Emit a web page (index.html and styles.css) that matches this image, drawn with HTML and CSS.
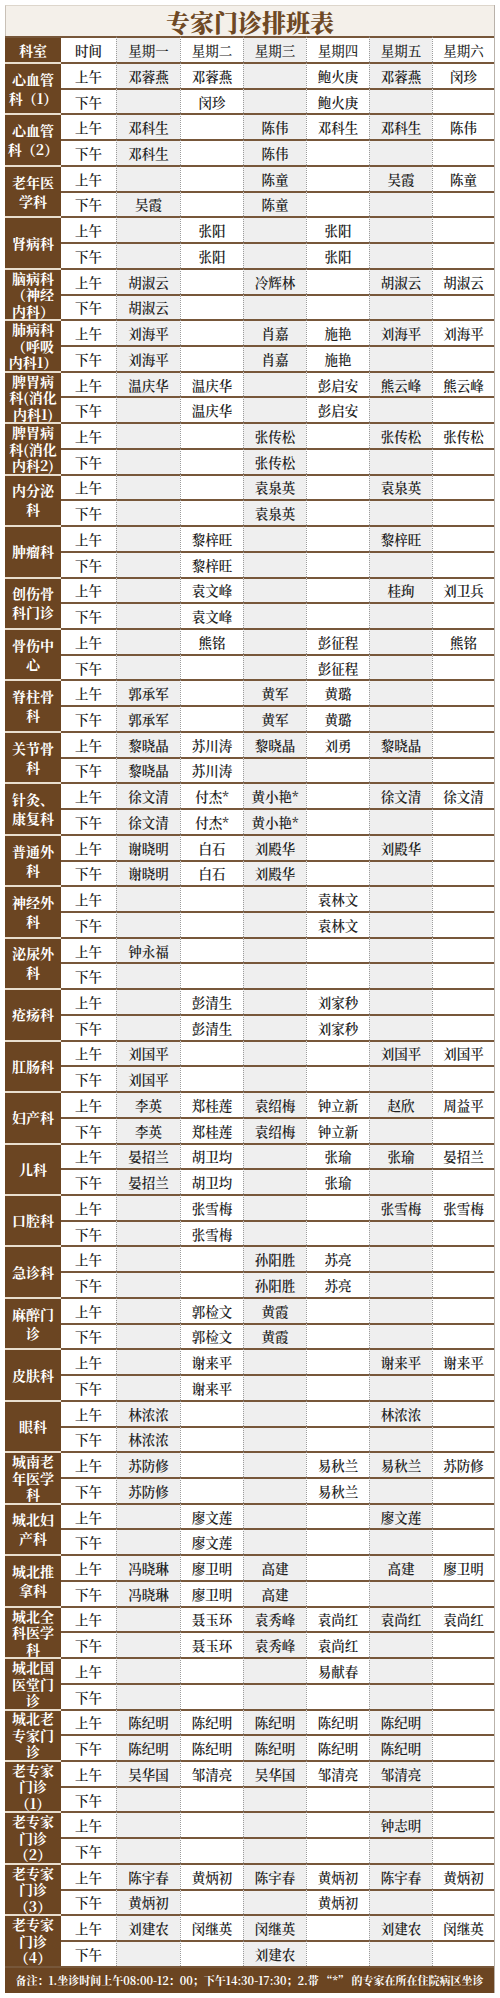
FILE: index.html
```html
<!DOCTYPE html>
<html lang="zh-CN">
<head>
<meta charset="utf-8">
<title>专家门诊排班表</title>
<link rel="stylesheet" href="styles.css">
</head>
<body>
<div class="sheet">
  <div class="title">专家门诊排班表</div>
  <div class="head">
    <div class="name">科室</div><div class="t">时间</div><div class="d">星期一</div><div class="d">星期二</div><div class="d">星期三</div><div class="d">星期四</div><div class="d">星期五</div><div class="d">星期六</div>
  </div>

  <div class="dept"><div class="name">心血管<br>科（1）</div>
    <div class="t">上午</div><div class="d">邓蓉燕</div><div class="d">邓蓉燕</div><div class="d"></div><div class="d">鲍火庚</div><div class="d">邓蓉燕</div><div class="d">闵珍</div>
    <div class="t">下午</div><div class="d"></div><div class="d">闵珍</div><div class="d"></div><div class="d">鲍火庚</div><div class="d"></div><div class="d"></div>
  </div>
  <div class="dept"><div class="name">心血管<br>科（2）</div>
    <div class="t">上午</div><div class="d">邓科生</div><div class="d"></div><div class="d">陈伟</div><div class="d">邓科生</div><div class="d">邓科生</div><div class="d">陈伟</div>
    <div class="t">下午</div><div class="d">邓科生</div><div class="d"></div><div class="d">陈伟</div><div class="d"></div><div class="d"></div><div class="d"></div>
  </div>
  <div class="dept"><div class="name">老年医<br>学科</div>
    <div class="t">上午</div><div class="d"></div><div class="d"></div><div class="d">陈童</div><div class="d"></div><div class="d">吴霞</div><div class="d">陈童</div>
    <div class="t">下午</div><div class="d">吴霞</div><div class="d"></div><div class="d">陈童</div><div class="d"></div><div class="d"></div><div class="d"></div>
  </div>
  <div class="dept"><div class="name">肾病科</div>
    <div class="t">上午</div><div class="d"></div><div class="d">张阳</div><div class="d"></div><div class="d">张阳</div><div class="d"></div><div class="d"></div>
    <div class="t">下午</div><div class="d"></div><div class="d">张阳</div><div class="d"></div><div class="d">张阳</div><div class="d"></div><div class="d"></div>
  </div>
  <div class="dept"><div class="name l3">脑病科<br>（神经<br>内科）</div>
    <div class="t">上午</div><div class="d">胡淑云</div><div class="d"></div><div class="d">冷辉林</div><div class="d"></div><div class="d">胡淑云</div><div class="d">胡淑云</div>
    <div class="t">下午</div><div class="d">胡淑云</div><div class="d"></div><div class="d"></div><div class="d"></div><div class="d"></div><div class="d"></div>
  </div>
  <div class="dept"><div class="name l3">肺病科<br>（呼吸<br>内科1）</div>
    <div class="t">上午</div><div class="d">刘海平</div><div class="d"></div><div class="d">肖嘉</div><div class="d">施艳</div><div class="d">刘海平</div><div class="d">刘海平</div>
    <div class="t">下午</div><div class="d">刘海平</div><div class="d"></div><div class="d">肖嘉</div><div class="d">施艳</div><div class="d"></div><div class="d"></div>
  </div>
  <div class="dept"><div class="name l3">脾胃病<br>科(消化<br>内科1)</div>
    <div class="t">上午</div><div class="d">温庆华</div><div class="d">温庆华</div><div class="d"></div><div class="d">彭启安</div><div class="d">熊云峰</div><div class="d">熊云峰</div>
    <div class="t">下午</div><div class="d"></div><div class="d">温庆华</div><div class="d"></div><div class="d">彭启安</div><div class="d"></div><div class="d"></div>
  </div>
  <div class="dept"><div class="name l3">脾胃病<br>科(消化<br>内科2)</div>
    <div class="t">上午</div><div class="d"></div><div class="d"></div><div class="d">张传松</div><div class="d"></div><div class="d">张传松</div><div class="d">张传松</div>
    <div class="t">下午</div><div class="d"></div><div class="d"></div><div class="d">张传松</div><div class="d"></div><div class="d"></div><div class="d"></div>
  </div>
  <div class="dept"><div class="name">内分泌<br>科</div>
    <div class="t">上午</div><div class="d"></div><div class="d"></div><div class="d">袁泉英</div><div class="d"></div><div class="d">袁泉英</div><div class="d"></div>
    <div class="t">下午</div><div class="d"></div><div class="d"></div><div class="d">袁泉英</div><div class="d"></div><div class="d"></div><div class="d"></div>
  </div>
  <div class="dept"><div class="name">肿瘤科</div>
    <div class="t">上午</div><div class="d"></div><div class="d">黎梓旺</div><div class="d"></div><div class="d"></div><div class="d">黎梓旺</div><div class="d"></div>
    <div class="t">下午</div><div class="d"></div><div class="d">黎梓旺</div><div class="d"></div><div class="d"></div><div class="d"></div><div class="d"></div>
  </div>
  <div class="dept"><div class="name">创伤骨<br>科门诊</div>
    <div class="t">上午</div><div class="d"></div><div class="d">袁文峰</div><div class="d"></div><div class="d"></div><div class="d">桂珣</div><div class="d">刘卫兵</div>
    <div class="t">下午</div><div class="d"></div><div class="d">袁文峰</div><div class="d"></div><div class="d"></div><div class="d"></div><div class="d"></div>
  </div>
  <div class="dept"><div class="name">骨伤中<br>心</div>
    <div class="t">上午</div><div class="d"></div><div class="d">熊铭</div><div class="d"></div><div class="d">彭征程</div><div class="d"></div><div class="d">熊铭</div>
    <div class="t">下午</div><div class="d"></div><div class="d"></div><div class="d"></div><div class="d">彭征程</div><div class="d"></div><div class="d"></div>
  </div>
  <div class="dept"><div class="name">脊柱骨<br>科</div>
    <div class="t">上午</div><div class="d">郭承军</div><div class="d"></div><div class="d">黄军</div><div class="d">黄璐</div><div class="d"></div><div class="d"></div>
    <div class="t">下午</div><div class="d">郭承军</div><div class="d"></div><div class="d">黄军</div><div class="d">黄璐</div><div class="d"></div><div class="d"></div>
  </div>
  <div class="dept"><div class="name">关节骨<br>科</div>
    <div class="t">上午</div><div class="d">黎晓晶</div><div class="d">苏川涛</div><div class="d">黎晓晶</div><div class="d">刘勇</div><div class="d">黎晓晶</div><div class="d"></div>
    <div class="t">下午</div><div class="d">黎晓晶</div><div class="d">苏川涛</div><div class="d"></div><div class="d"></div><div class="d"></div><div class="d"></div>
  </div>
  <div class="dept"><div class="name">针灸、<br>康复科</div>
    <div class="t">上午</div><div class="d">徐文清</div><div class="d">付杰*</div><div class="d">黄小艳*</div><div class="d"></div><div class="d">徐文清</div><div class="d">徐文清</div>
    <div class="t">下午</div><div class="d">徐文清</div><div class="d">付杰*</div><div class="d">黄小艳*</div><div class="d"></div><div class="d"></div><div class="d"></div>
  </div>
  <div class="dept"><div class="name">普通外<br>科</div>
    <div class="t">上午</div><div class="d">谢晓明</div><div class="d">白石</div><div class="d">刘殿华</div><div class="d"></div><div class="d">刘殿华</div><div class="d"></div>
    <div class="t">下午</div><div class="d">谢晓明</div><div class="d">白石</div><div class="d">刘殿华</div><div class="d"></div><div class="d"></div><div class="d"></div>
  </div>
  <div class="dept"><div class="name">神经外<br>科</div>
    <div class="t">上午</div><div class="d"></div><div class="d"></div><div class="d"></div><div class="d">袁林文</div><div class="d"></div><div class="d"></div>
    <div class="t">下午</div><div class="d"></div><div class="d"></div><div class="d"></div><div class="d">袁林文</div><div class="d"></div><div class="d"></div>
  </div>
  <div class="dept"><div class="name">泌尿外<br>科</div>
    <div class="t">上午</div><div class="d">钟永福</div><div class="d"></div><div class="d"></div><div class="d"></div><div class="d"></div><div class="d"></div>
    <div class="t">下午</div><div class="d"></div><div class="d"></div><div class="d"></div><div class="d"></div><div class="d"></div><div class="d"></div>
  </div>
  <div class="dept"><div class="name">疮疡科</div>
    <div class="t">上午</div><div class="d"></div><div class="d">彭清生</div><div class="d"></div><div class="d">刘家秒</div><div class="d"></div><div class="d"></div>
    <div class="t">下午</div><div class="d"></div><div class="d">彭清生</div><div class="d"></div><div class="d">刘家秒</div><div class="d"></div><div class="d"></div>
  </div>
  <div class="dept"><div class="name">肛肠科</div>
    <div class="t">上午</div><div class="d">刘国平</div><div class="d"></div><div class="d"></div><div class="d"></div><div class="d">刘国平</div><div class="d">刘国平</div>
    <div class="t">下午</div><div class="d">刘国平</div><div class="d"></div><div class="d"></div><div class="d"></div><div class="d"></div><div class="d"></div>
  </div>
  <div class="dept"><div class="name">妇产科</div>
    <div class="t">上午</div><div class="d">李英</div><div class="d">郑桂莲</div><div class="d">袁绍梅</div><div class="d">钟立新</div><div class="d">赵欣</div><div class="d">周益平</div>
    <div class="t">下午</div><div class="d">李英</div><div class="d">郑桂莲</div><div class="d">袁绍梅</div><div class="d">钟立新</div><div class="d"></div><div class="d"></div>
  </div>
  <div class="dept"><div class="name">儿科</div>
    <div class="t">上午</div><div class="d">晏招兰</div><div class="d">胡卫均</div><div class="d"></div><div class="d">张瑜</div><div class="d">张瑜</div><div class="d">晏招兰</div>
    <div class="t">下午</div><div class="d">晏招兰</div><div class="d">胡卫均</div><div class="d"></div><div class="d">张瑜</div><div class="d"></div><div class="d"></div>
  </div>
  <div class="dept"><div class="name">口腔科</div>
    <div class="t">上午</div><div class="d"></div><div class="d">张雪梅</div><div class="d"></div><div class="d"></div><div class="d">张雪梅</div><div class="d">张雪梅</div>
    <div class="t">下午</div><div class="d"></div><div class="d">张雪梅</div><div class="d"></div><div class="d"></div><div class="d"></div><div class="d"></div>
  </div>
  <div class="dept"><div class="name">急诊科</div>
    <div class="t">上午</div><div class="d"></div><div class="d"></div><div class="d">孙阳胜</div><div class="d">苏亮</div><div class="d"></div><div class="d"></div>
    <div class="t">下午</div><div class="d"></div><div class="d"></div><div class="d">孙阳胜</div><div class="d">苏亮</div><div class="d"></div><div class="d"></div>
  </div>
  <div class="dept"><div class="name">麻醉门<br>诊</div>
    <div class="t">上午</div><div class="d"></div><div class="d">郭检文</div><div class="d">黄霞</div><div class="d"></div><div class="d"></div><div class="d"></div>
    <div class="t">下午</div><div class="d"></div><div class="d">郭检文</div><div class="d">黄霞</div><div class="d"></div><div class="d"></div><div class="d"></div>
  </div>
  <div class="dept"><div class="name">皮肤科</div>
    <div class="t">上午</div><div class="d"></div><div class="d">谢来平</div><div class="d"></div><div class="d"></div><div class="d">谢来平</div><div class="d">谢来平</div>
    <div class="t">下午</div><div class="d"></div><div class="d">谢来平</div><div class="d"></div><div class="d"></div><div class="d"></div><div class="d"></div>
  </div>
  <div class="dept"><div class="name">眼科</div>
    <div class="t">上午</div><div class="d">林浓浓</div><div class="d"></div><div class="d"></div><div class="d"></div><div class="d">林浓浓</div><div class="d"></div>
    <div class="t">下午</div><div class="d">林浓浓</div><div class="d"></div><div class="d"></div><div class="d"></div><div class="d"></div><div class="d"></div>
  </div>
  <div class="dept"><div class="name l3">城南老<br>年医学<br>科</div>
    <div class="t">上午</div><div class="d">苏防修</div><div class="d"></div><div class="d"></div><div class="d">易秋兰</div><div class="d">易秋兰</div><div class="d">苏防修</div>
    <div class="t">下午</div><div class="d">苏防修</div><div class="d"></div><div class="d"></div><div class="d">易秋兰</div><div class="d"></div><div class="d"></div>
  </div>
  <div class="dept"><div class="name">城北妇<br>产科</div>
    <div class="t">上午</div><div class="d"></div><div class="d">廖文莲</div><div class="d"></div><div class="d"></div><div class="d">廖文莲</div><div class="d"></div>
    <div class="t">下午</div><div class="d"></div><div class="d">廖文莲</div><div class="d"></div><div class="d"></div><div class="d"></div><div class="d"></div>
  </div>
  <div class="dept"><div class="name">城北推<br>拿科</div>
    <div class="t">上午</div><div class="d">冯晓琳</div><div class="d">廖卫明</div><div class="d">高建</div><div class="d"></div><div class="d">高建</div><div class="d">廖卫明</div>
    <div class="t">下午</div><div class="d">冯晓琳</div><div class="d">廖卫明</div><div class="d">高建</div><div class="d"></div><div class="d"></div><div class="d"></div>
  </div>
  <div class="dept"><div class="name l3">城北全<br>科医学<br>科</div>
    <div class="t">上午</div><div class="d"></div><div class="d">聂玉环</div><div class="d">袁秀峰</div><div class="d">袁尚红</div><div class="d">袁尚红</div><div class="d">袁尚红</div>
    <div class="t">下午</div><div class="d"></div><div class="d">聂玉环</div><div class="d">袁秀峰</div><div class="d">袁尚红</div><div class="d"></div><div class="d"></div>
  </div>
  <div class="dept"><div class="name l3">城北国<br>医堂门<br>诊</div>
    <div class="t">上午</div><div class="d"></div><div class="d"></div><div class="d"></div><div class="d">易献春</div><div class="d"></div><div class="d"></div>
    <div class="t">下午</div><div class="d"></div><div class="d"></div><div class="d"></div><div class="d"></div><div class="d"></div><div class="d"></div>
  </div>
  <div class="dept"><div class="name l3">城北老<br>专家门<br>诊</div>
    <div class="t">上午</div><div class="d">陈纪明</div><div class="d">陈纪明</div><div class="d">陈纪明</div><div class="d">陈纪明</div><div class="d">陈纪明</div><div class="d"></div>
    <div class="t">下午</div><div class="d">陈纪明</div><div class="d">陈纪明</div><div class="d">陈纪明</div><div class="d">陈纪明</div><div class="d">陈纪明</div><div class="d"></div>
  </div>
  <div class="dept"><div class="name l3">老专家<br>门诊<br>（1）</div>
    <div class="t">上午</div><div class="d">吴华国</div><div class="d">邹清亮</div><div class="d">吴华国</div><div class="d">邹清亮</div><div class="d">邹清亮</div><div class="d"></div>
    <div class="t">下午</div><div class="d"></div><div class="d"></div><div class="d"></div><div class="d"></div><div class="d"></div><div class="d"></div>
  </div>
  <div class="dept"><div class="name l3">老专家<br>门诊<br>（2）</div>
    <div class="t">上午</div><div class="d"></div><div class="d"></div><div class="d"></div><div class="d"></div><div class="d">钟志明</div><div class="d"></div>
    <div class="t">下午</div><div class="d"></div><div class="d"></div><div class="d"></div><div class="d"></div><div class="d"></div><div class="d"></div>
  </div>
  <div class="dept"><div class="name l3">老专家<br>门诊<br>（3）</div>
    <div class="t">上午</div><div class="d">陈宇春</div><div class="d">黄炳初</div><div class="d">陈宇春</div><div class="d">黄炳初</div><div class="d">陈宇春</div><div class="d">黄炳初</div>
    <div class="t">下午</div><div class="d">黄炳初</div><div class="d"></div><div class="d"></div><div class="d">黄炳初</div><div class="d"></div><div class="d"></div>
  </div>
  <div class="dept"><div class="name l3">老专家<br>门诊<br>（4）</div>
    <div class="t">上午</div><div class="d">刘建农</div><div class="d">闵继英</div><div class="d">闵继英</div><div class="d"></div><div class="d">刘建农</div><div class="d">闵继英</div>
    <div class="t">下午</div><div class="d"></div><div class="d"></div><div class="d">刘建农</div><div class="d"></div><div class="d"></div><div class="d"></div>
  </div>

  <div class="foot">备注：1.坐诊时间上午08:00-12：00；下午14:30-17:30；2.带 “*” 的专家在所在住院病区坐诊</div>
</div>
</body>
</html>
```

FILE: styles.css
```css
* { box-sizing: border-box; }

body {
  margin: 0;
  background: #ffffff;
  font-family: "Noto Serif CJK SC", "Noto Sans CJK SC", serif;
  color: #1f1f1f;
}

.sheet {
  margin: 5px 0 0 5px;
  width: 490px;
  border-right: 1px solid #b9b2aa;
}

.title {
  height: 31px;
  background: #f4f0ea;
  border-left: 1px solid #c9c1b7;
  border-top: 1px solid #ddd6cc;
  display: flex;
  align-items: center;
  justify-content: center;
  font-size: 24px;
  font-weight: 900;
  color: #6e4824;
}

.head,
.dept {
  display: grid;
  grid-template-columns: 56px 55px 64px 63px 63px 63px 63px 62px;
}

.head { height: 26px; }

.dept {
  height: 51.46px;
  grid-template-rows: 1fr 1fr;
}

.head > div,
.dept > div {
  display: flex;
  align-items: center;
  justify-content: center;
  border-top: 2px solid #77573a;
  font-size: 13.5px;
  font-weight: 600;
  white-space: nowrap;
}

.head > .d { font-weight: 500; }

.name {
  background: #6b4522;
  color: #ffffff;
  text-align: center;
}

.head > .name {
  font-size: 14px;
  font-weight: 700;
}

.dept > .name {
  grid-row: span 2;
  border-top-color: #e9dece;
  font-size: 14px;
  font-weight: 700;
  line-height: 19px;
  white-space: normal;
}

.dept > .name.l3 { line-height: 16.5px; }

.t { font-weight: 700; }

.d { border-left: 1px dotted #9b9b9b; }

.head > :nth-child(3),
.head > :nth-child(5),
.head > :nth-child(7),
.dept > :nth-child(3),
.dept > :nth-child(5),
.dept > :nth-child(7),
.dept > :nth-child(10),
.dept > :nth-child(12),
.dept > :nth-child(14) {
  background: #efefef;
}

.foot {
  height: 27px;
  background: #6b4522;
  border-top: 2px solid #77573a;
  color: #ffffff;
  font-size: 11px;
  font-weight: 700;
  display: flex;
  align-items: center;
  justify-content: center;
  white-space: nowrap;
}
```
